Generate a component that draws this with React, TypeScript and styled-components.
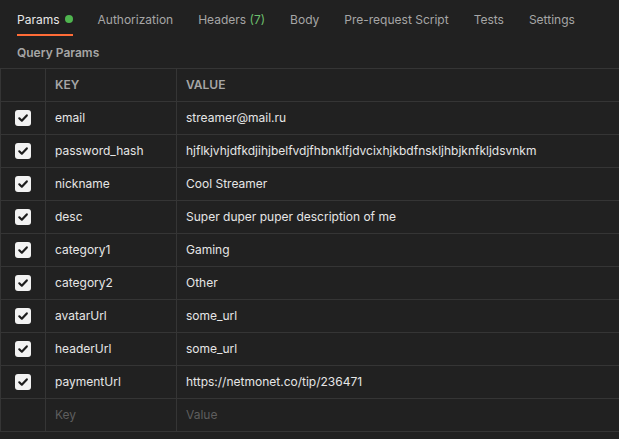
import React from "react";
import styled, { createGlobalStyle } from "styled-components";

const Global = createGlobalStyle`
  html, body { margin: 0; padding: 0; background: #212121; }
  body { font-family: Inter, "Noto Sans", sans-serif; -webkit-font-smoothing: antialiased; }
`;

const Page = styled.div`
  width: 619px;
  height: 439px;
  background: #212121;
  overflow: hidden;
`;

const Tabs = styled.div`
  display: flex;
  align-items: center;
  gap: 25px;
  padding: 0 0 0 17px;
  height: 36px;
`;

const Tab = styled.div<{ $active?: boolean }>`
  position: relative;
  box-sizing: border-box;
  display: flex;
  align-items: center;
  gap: 5px;
  height: 36px;
  padding-top: 2px;
  font-size: 12px;
  color: ${(p) => (p.$active ? "#e8e8e8" : "#a6a6a6")};
  white-space: nowrap;
  &::after {
    content: "";
    display: ${(p) => (p.$active ? "block" : "none")};
    position: absolute;
    left: 0;
    right: 0;
    bottom: 0;
    height: 2px;
    background: #ff6c37;
  }
`;

const Dot = styled.span`
  width: 8px;
  height: 8px;
  border-radius: 50%;
  background: #4fb54f;
`;

const Count = styled.span`
  color: #6cbf6c;
`;

const SectionTitle = styled.div`
  padding: 0 17px;
  height: 32px;
  display: flex;
  align-items: center;
  font-size: 12px;
  font-weight: 600;
  color: #a6a6a6;
`;

const Table = styled.div`
  border-top: 1px solid #353535;
  border-left: 1px solid #353535;
  width: 700px;
`;

const Row = styled.div`
  display: grid;
  grid-template-columns: 45px 131px 1fr;
  height: 33px;
  border-bottom: 1px solid #353535;
  box-sizing: border-box;
`;

const Cell = styled.div<{ $muted?: boolean; $head?: boolean }>`
  display: flex;
  align-items: center;
  padding: 0 9px 1px;
  border-right: 1px solid #353535;
  font-size: 12px;
  font-weight: ${(p) => (p.$head ? 600 : 400)};
  color: ${(p) => (p.$head ? "#a6a6a6" : p.$muted ? "#5e5e5e" : "#e6e6e6")};
  white-space: nowrap;
  &:last-child { border-right: none; }
`;

const CheckCell = styled.div`
  display: flex;
  align-items: center;
  justify-content: center;
  border-right: 1px solid #353535;
`;

const Box = styled.div`
  width: 16px;
  height: 16px;
  border-radius: 3px;
  background: #f2f2f2;
  display: flex;
  align-items: center;
  justify-content: center;
`;

const Check = () => (
  <Box>
    <svg width="12" height="12" viewBox="0 0 12 12">
      <path d="M2.3 6.3 L4.8 8.7 L9.8 3.4" fill="none" stroke="#1c1c1c" strokeWidth="2.2" strokeLinecap="round" strokeLinejoin="round" />
    </svg>
  </Box>
);

const params: [string, string][] = [
  ["email", "streamer@mail.ru"],
  ["password_hash", "hjflkjvhjdfkdjihjbelfvdjfhbnklfjdvcixhjkbdfnskljhbjknfkljdsvnkm"],
  ["nickname", "Cool Streamer"],
  ["desc", "Super duper puper description of me"],
  ["category1", "Gaming"],
  ["category2", "Other"],
  ["avatarUrl", "some_url"],
  ["headerUrl", "some_url"],
  ["paymentUrl", "https://netmonet.co/tip/236471"],
];

export default function App() {
  return (
    <Page>
      <Global />
      <Tabs>
        <Tab $active>
          Params <Dot />
        </Tab>
        <Tab>Authorization</Tab>
        <Tab>
          <span>
            Headers <Count>(7)</Count>
          </span>
        </Tab>
        <Tab>Body</Tab>
        <Tab>Pre-request Script</Tab>
        <Tab>Tests</Tab>
        <Tab>Settings</Tab>
      </Tabs>
      <SectionTitle>Query Params</SectionTitle>
      <Table>
        <Row>
          <CheckCell />
          <Cell $head>KEY</Cell>
          <Cell $head>VALUE</Cell>
        </Row>
        {params.map(([k, v]) => (
          <Row key={k}>
            <CheckCell>
              <Check />
            </CheckCell>
            <Cell>{k}</Cell>
            <Cell>{v}</Cell>
          </Row>
        ))}
        <Row>
          <CheckCell />
          <Cell $muted>Key</Cell>
          <Cell $muted>Value</Cell>
        </Row>
      </Table>
    </Page>
  );
}
